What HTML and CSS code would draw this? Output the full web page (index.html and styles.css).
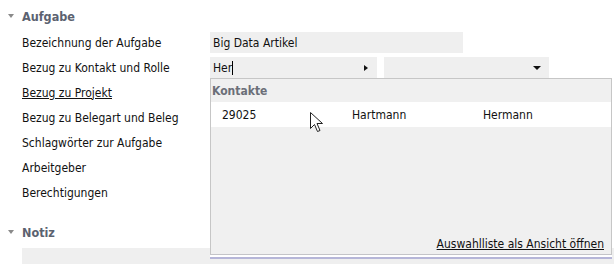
FILE: index.html
```html
<!DOCTYPE html>
<html lang="de">
<head>
<meta charset="utf-8">
<link rel="stylesheet" href="styles.css">
</head>
<body>
<div class="page">
  <section class="group">
    <div class="group-head"><span class="caret"></span>Aufgabe</div>
    <div class="rows">
      <div class="row">
        <div class="label">Bezeichnung der Aufgabe</div>
        <div class="field field-wide">Big Data Artikel</div>
      </div>
      <div class="row">
        <div class="label">Bezug zu Kontakt und Rolle</div>
        <div class="combo">
          <div class="field field-mid"><span>Her<span class="cursor"></span></span><span class="arrow-right"></span></div>
          <div class="field field-sel"><span></span><span class="arrow-down"></span></div>
        </div>
      </div>
      <div class="row"><div class="label link">Bezug zu Projekt</div></div>
      <div class="row"><div class="label">Bezug zu Belegart und Beleg</div></div>
      <div class="row"><div class="label">Schlagwörter zur Aufgabe</div></div>
      <div class="row"><div class="label">Arbeitgeber</div></div>
      <div class="row"><div class="label">Berechtigungen</div></div>
    </div>
  </section>
  <section class="group group-note">
    <div class="group-head"><span class="caret"></span>Notiz</div>
    <div class="note-box"></div>
  </section>

  <div class="popup">
    <div class="popup-head">Kontakte</div>
    <div class="popup-row">
      <span class="c1">29025</span><span class="c2">Hartmann</span><span class="c3">Hermann</span>
    </div>
    <div class="popup-fill"></div>
    <div class="popup-foot"><a class="foot-link">Auswahlliste als Ansicht öffnen</a></div>
  </div>
  <div class="popup-line"></div>

  <svg class="mouse" width="14" height="22" viewBox="0 0 14 22">
    <path d="M0.5 0.5 L0.5 16.5 L4.5 12.5 L7.5 19.5 L10 18.5 L7 11.5 L12.5 11.5 Z" fill="#fff" stroke="#222" stroke-width="1"/>
  </svg>
</div>
</body>
</html>
```
FILE: styles.css
```css
html, body {
  margin: 0;
  padding: 0;
  background: #fff;
}
body {
  font-family: "DejaVu Sans Condensed", "DejaVu Sans", sans-serif;
  font-size: 12px;
  color: #111;
}
.page {
  position: relative;
  width: 614px;
  height: 264px;
  overflow: hidden;
}
.group {
  padding-left: 8px;
}
.group-head {
  display: flex;
  align-items: center;
  height: 18px;
  margin-top: 7px;
  font-weight: bold;
  font-size: 12.5px;
  color: #5b6270;
}
.caret {
  width: 0;
  height: 0;
  border-left: 3px solid transparent;
  border-right: 3px solid transparent;
  border-top: 4px solid #8a8a8a;
  margin-right: 8px;
}
.rows {
  display: flex;
  flex-direction: column;
  padding-left: 14px;
  margin-top: 5px;
}
.row {
  display: flex;
  align-items: center;
  height: 25px;
}
.label {
  width: 188px;
  white-space: nowrap;
}
.link {
  text-decoration: underline;
}
.field {
  background: #efefef;
  height: 21px;
  display: flex;
  align-items: center;
  justify-content: space-between;
  padding: 0 8px 0 3px;
  box-sizing: border-box;
}
.field-wide {
  width: 253px;
}
.combo {
  display: flex;
  gap: 7px;
}
.field-mid {
  width: 167px;
}
.field-sel {
  width: 165px;
}
.cursor {
  display: inline-block;
  width: 1px;
  height: 14px;
  background: #000;
  vertical-align: -3px;
}
.arrow-right {
  width: 0;
  height: 0;
  border-top: 3.5px solid transparent;
  border-bottom: 3.5px solid transparent;
  border-left: 4px solid #111;
  margin-right: 1px;
}
.arrow-down {
  width: 0;
  height: 0;
  border-left: 4px solid transparent;
  border-right: 4px solid transparent;
  border-top: 4px solid #111;
}
.group-note {
  margin-top: 18px;
}
.note-box {
  margin-left: 14px;
  margin-top: 7px;
  height: 20px;
  width: 592px;
  background: #efefef;
}
.popup {
  position: absolute;
  left: 210px;
  top: 78px;
  width: 402px;
  height: 176px;
  box-sizing: border-box;
  background: #f0f0f0;
  border: 1px solid #c6c6c6;
  border-bottom: none;
  display: flex;
  flex-direction: column;
}
.popup-head {
  height: 23px;
  display: flex;
  align-items: center;
  padding-left: 1px;
  font-weight: bold;
  color: #6b6f78;
  font-size: 12px;
}
.popup-row {
  background: #fff;
  height: 25px;
  display: flex;
  align-items: center;
  padding-left: 11px;
}
.c1 { width: 130px; }
.c2 { width: 131px; }
.popup-fill { flex: 1; }
.popup-foot {
  display: flex;
  justify-content: flex-end;
  padding: 0 7px 3px 0;
}
.foot-link {
  text-decoration: underline;
  color: #111;
}
.popup-line {
  position: absolute;
  left: 210px;
  top: 254px;
  width: 402px;
  height: 1px;
  background: #c4c4c8;
  border-bottom: 2px solid #fff;
  box-shadow: 0 2px 0 #b6b6d8;
}
.mouse {
  position: absolute;
  left: 310px;
  top: 112px;
}
```
